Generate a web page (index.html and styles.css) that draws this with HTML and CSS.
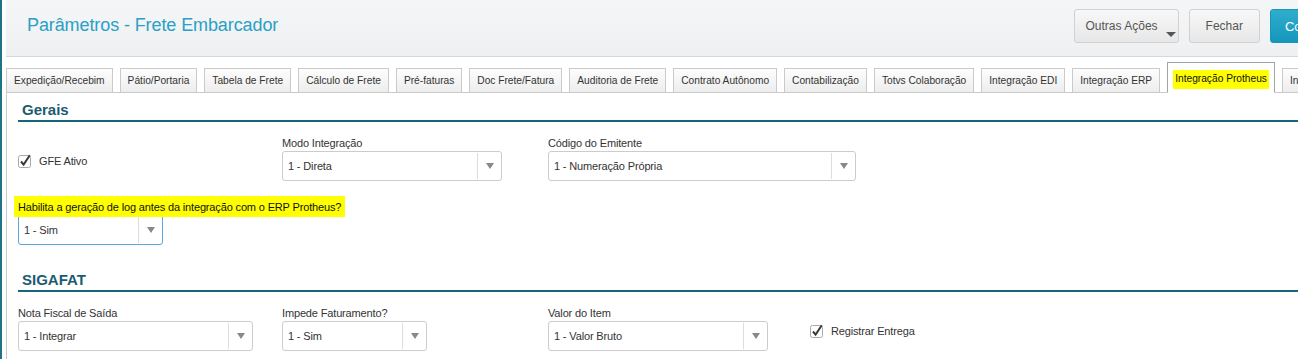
FILE: index.html
```html
<!DOCTYPE html>
<html lang="pt-BR">

<head>
    <meta charset="UTF-8">
    <meta name="viewport" content="width=device-width, initial-scale=1.0">
    <title>Parâmetros - Frete Embarcador</title>
    <link rel="stylesheet" href="styles.css">
</head>

<body>
    <div class="app">

        <header class="page-header">
            <h1 class="page-title">Parâmetros - Frete Embarcador</h1>
            <div class="header-actions">
                <button class="btn btn-dropdown">Outras Ações<span class="caret"></span></button>
                <button class="btn">Fechar</button>
                <button class="btn btn-primary">Confirmar</button>
            </div>
        </header>

        <ul class="tabs">
            <li class="tab">Expedição/Recebim</li>
            <li class="tab">Pátio/Portaria</li>
            <li class="tab">Tabela de Frete</li>
            <li class="tab">Cálculo de Frete</li>
            <li class="tab">Pré-faturas</li>
            <li class="tab">Doc Frete/Fatura</li>
            <li class="tab">Auditoria de Frete</li>
            <li class="tab">Contrato Autônomo</li>
            <li class="tab">Contabilização</li>
            <li class="tab">Totvs Colaboração</li>
            <li class="tab">Integração EDI</li>
            <li class="tab">Integração ERP</li>
            <li class="tab tab-active"><span class="marker">Integração Protheus</span></li>
            <li class="tab">Integração TMS</li>
        </ul>

        <div class="tab-panel">

            <section class="group">
                <h2 class="group-title">Gerais</h2>

                <div class="field-row">
                    <label class="check-field">
                        <svg class="check-icon" width="16" height="16" viewBox="0 0 16 16">
                            <rect x="0.5" y="2.5" width="12" height="12" rx="2" fill="#fff" stroke="#a9a9a9" />
                            <path d="M3 8.5 L5.6 11.6 L11.8 2.2" fill="none" stroke="#3a3a3a" stroke-width="2" />
                        </svg>
                        GFE Ativo
                    </label>
                    <div class="field">
                        <label>Modo Integração</label>
                        <div class="select select-md">
                            <span class="select-value">1 - Direta</span>
                            <span class="select-arrow"></span>
                        </div>
                    </div>
                    <div class="field">
                        <label>Código do Emitente</label>
                        <div class="select select-xl">
                            <span class="select-value">1 - Numeração Própria</span>
                            <span class="select-arrow"></span>
                        </div>
                    </div>
                </div>

                <div class="field-row field-row-loose">
                    <div class="field field-wide">
                        <label><span class="marker marker-label">Habilita a geração de log antes da integração com o ERP Protheus?</span></label>
                        <div class="select select-sm select-focus">
                            <span class="select-value">1 - Sim</span>
                            <span class="select-arrow"></span>
                        </div>
                    </div>
                </div>
            </section>

            <section class="group group-next">
                <h2 class="group-title">SIGAFAT</h2>

                <div class="field-row">
                    <div class="field">
                        <label>Nota Fiscal de Saída</label>
                        <div class="select select-lg">
                            <span class="select-value">1 - Integrar</span>
                            <span class="select-arrow"></span>
                        </div>
                    </div>
                    <div class="field">
                        <label>Impede Faturamento?</label>
                        <div class="select select-sm">
                            <span class="select-value">1 - Sim</span>
                            <span class="select-arrow"></span>
                        </div>
                    </div>
                    <div class="field">
                        <label>Valor do Item</label>
                        <div class="select select-md">
                            <span class="select-value">1 - Valor Bruto</span>
                            <span class="select-arrow"></span>
                        </div>
                    </div>
                    <label class="check-field">
                        <svg class="check-icon" width="16" height="16" viewBox="0 0 16 16">
                            <rect x="0.5" y="2.5" width="12" height="12" rx="2" fill="#fff" stroke="#a9a9a9" />
                            <path d="M3 8.5 L5.6 11.6 L11.8 2.2" fill="none" stroke="#3a3a3a" stroke-width="2" />
                        </svg>
                        Registrar Entrega
                    </label>
                </div>
            </section>

        </div>
    </div>
</body>

</html>
```

FILE: styles.css
```css
* {
    box-sizing: border-box;
}

body {
    margin: 0;
    font-family: "Liberation Sans", Arial, sans-serif;
    font-size: 11px;
    letter-spacing: -0.15px;
    color: #333333;
    background: #ffffff;
    overflow: hidden;
}

.app {
    width: 1367px;
    min-height: 100vh;
    border-left: 2px solid #1e7386;
    padding-left: 4px;
}

/* header */

.page-header {
    display: flex;
    align-items: center;
    height: 57px;
    padding: 0 10px 0 21px;
    background: linear-gradient(#f5f6f7, #eef0f1);
    border-bottom: 1px solid #d6d8da;
}

.page-title {
    flex: 1;
    margin: 0 0 6px;
    font-size: 18px;
    line-height: 22px;
    font-weight: normal;
    letter-spacing: -0.1px;
    color: #2aa0c6;
}

.header-actions {
    display: flex;
    gap: 10px;
    margin-bottom: 4px;
}

.btn {
    position: relative;
    height: 34px;
    padding: 0 16px;
    border: 1px solid #cfd1d3;
    border-radius: 3px;
    background: linear-gradient(#f8f8f8, #e7e7e7);
    font-family: "Liberation Sans", Arial, sans-serif;
    font-size: 12px;
    color: #555555;
}

.btn-dropdown {
    padding: 0 20px 0 11px;
}

.caret {
    position: absolute;
    right: 2px;
    bottom: 5px;
    border-left: 5px solid transparent;
    border-right: 5px solid transparent;
    border-top: 5px solid #555555;
}

.btn-primary {
    padding: 0 14px;
    border-color: #1a95b8;
    background: linear-gradient(#2fadcd, #1696bc);
    color: #ffffff;
    font-size: 13px;
}

/* tabs */

.tabs {
    position: relative;
    display: flex;
    align-items: flex-end;
    gap: 7px;
    margin: 5px 0 -1px;
    padding: 0;
    list-style: none;
}

.tab {
    height: 25px;
    padding: 0 7px;
    border: 1px solid #cacaca;
    background: linear-gradient(#fdfdfd, #ededed);
    font-size: 10.2px;
    letter-spacing: 0;
    line-height: 23px;
    white-space: nowrap;
}

.tab-active {
    height: 31px;
    padding-top: 4px;
    border-color: #a3a3a3;
    border-bottom-color: #ffffff;
    background: #ffffff;
}

.marker {
    background: #ffff00;
    padding: 3px 2px 5px;
    margin: 0 -2px;
    color: #111111;
}

/* panel */

.tab-panel {
    min-height: 300px;
    border: 1px solid #cacaca;
    padding: 0 0 40px 11px;
}

.group-title {
    margin: 8px 0 0;
    padding: 0 0 1px 4px;
    font-size: 15px;
    line-height: 18px;
    letter-spacing: 0;
    color: #1b5c70;
    border-bottom: 2px solid #14667a;
}

.group-next {
    margin-top: 26px;
}

.field-row {
    display: grid;
    grid-template-columns: 264px 266px 262px auto;
    align-items: start;
    margin-top: 14px;
}

.field-row-loose {
    margin-top: 19px;
}

.field-wide {
    grid-column: 1 / -1;
}

.field label {
    display: block;
    line-height: 14px;
    margin-bottom: 1px;
}

.marker-label {
    padding: 5px 4px 4px;
    margin: 0 -4px;
}

.check-field {
    display: flex;
    align-items: center;
    gap: 5px;
    margin-top: 17px;
    line-height: 16px;
}

.check-icon {
    display: block;
}

/* select box */

.select {
    display: flex;
    height: 30px;
    border: 1px solid #cccccc;
    border-radius: 3px;
    background: #ffffff;
}

.select-focus {
    border-color: #5aa9d6;
}

.select-sm {
    width: 145px;
}

.select-md {
    width: 220px;
}

.select-lg {
    width: 235px;
}

.select-xl {
    width: 308px;
}

.select-value {
    flex: 1;
    padding-left: 5px;
    line-height: 28px;
    white-space: nowrap;
}

.select-arrow {
    display: flex;
    align-items: center;
    justify-content: center;
    width: 24px;
    margin: 1px 0;
    border-left: 1px solid #dddddd;
}

.select-arrow::after {
    content: "";
    border-left: 4px solid transparent;
    border-right: 4px solid transparent;
    border-top: 6px solid #888888;
}
```
